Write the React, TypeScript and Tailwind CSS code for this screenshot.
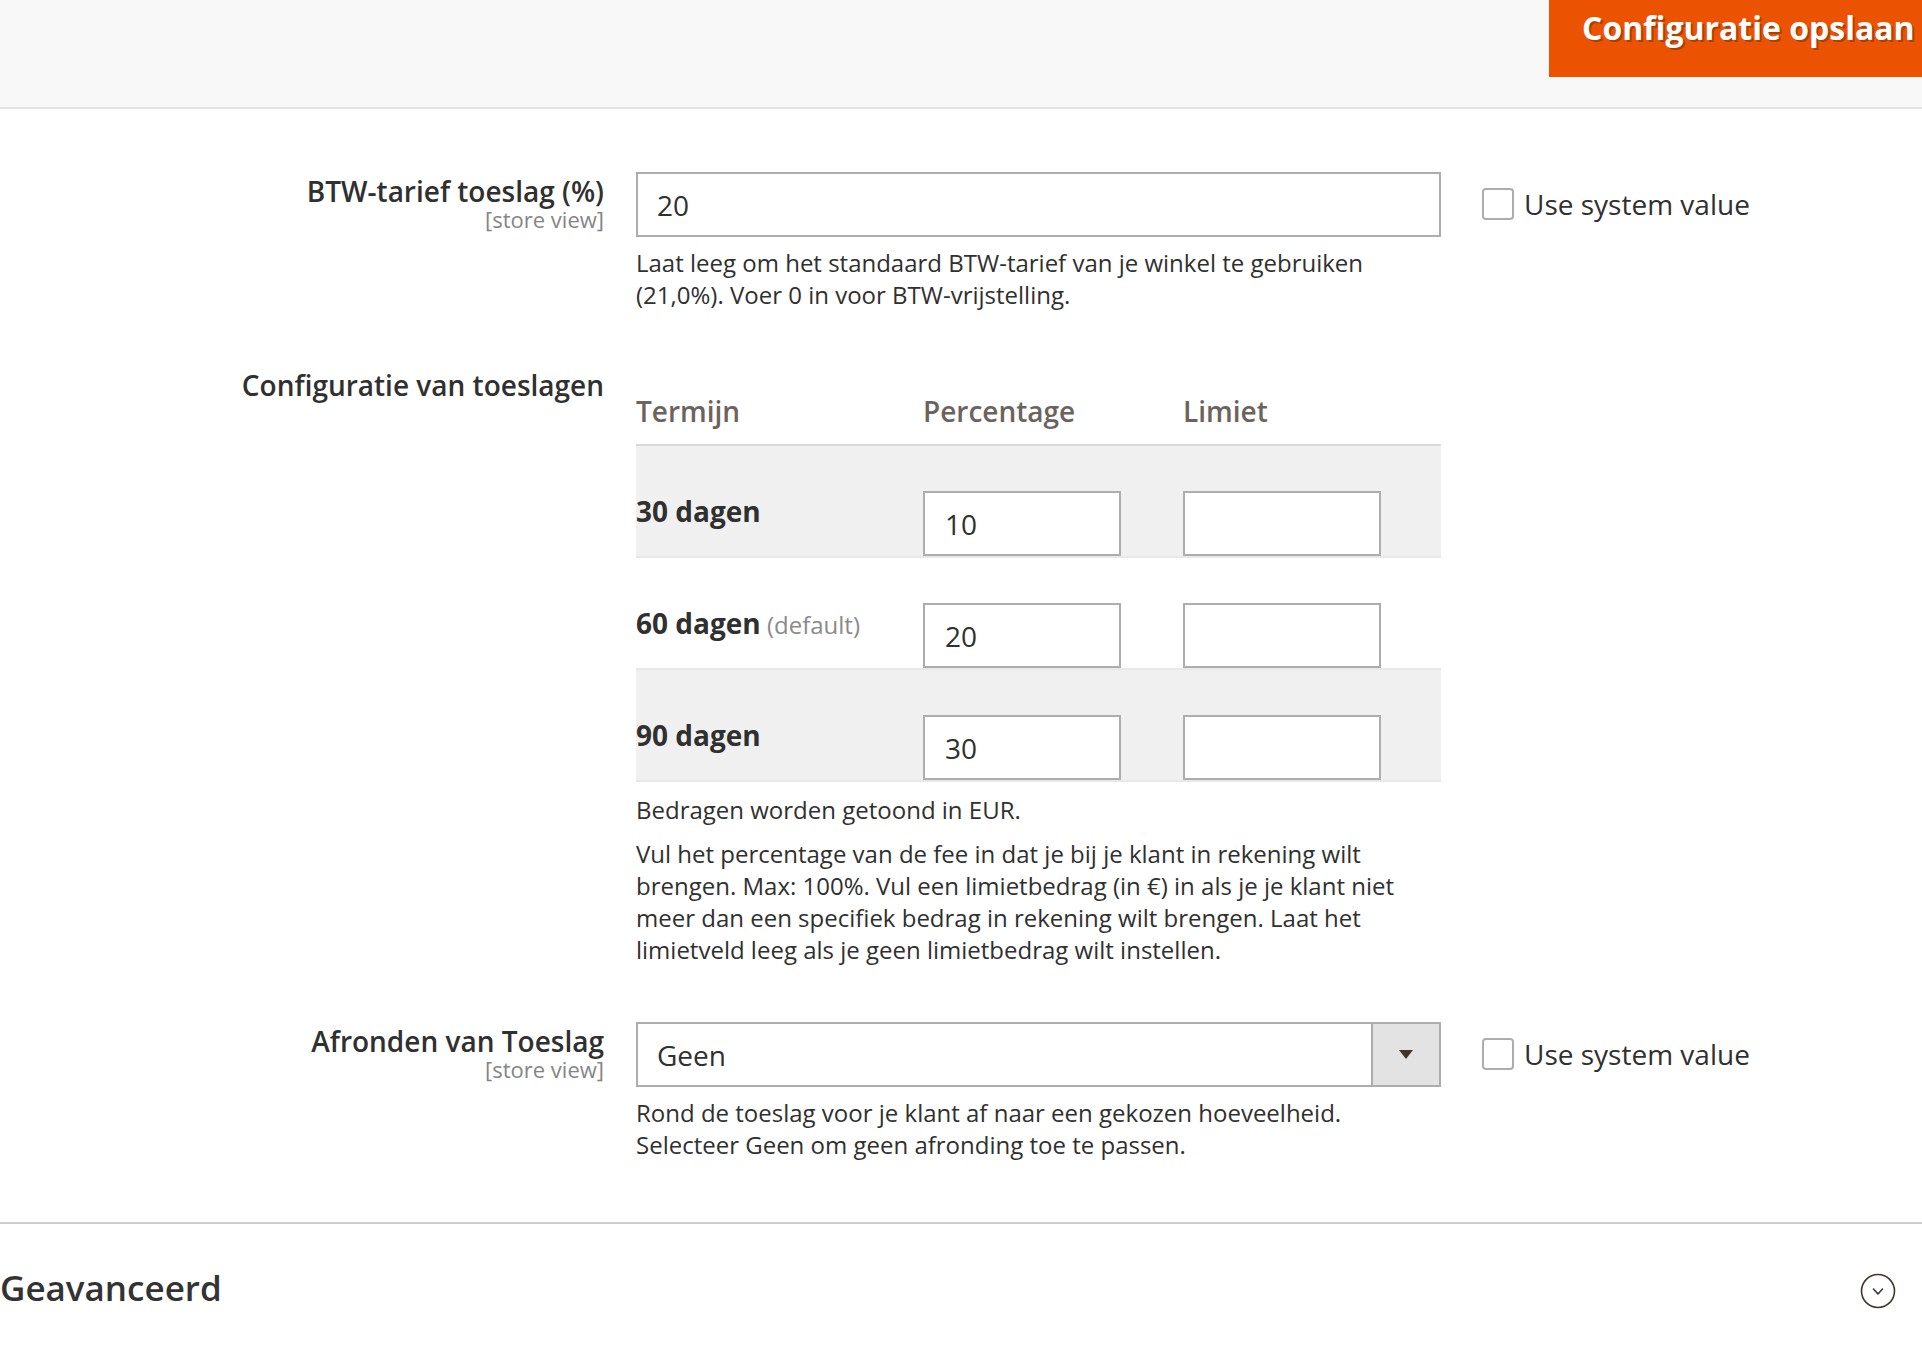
function UseSystemValue() {
  return (
    <label className="ml-[41px] mt-[12px] flex h-[40px] shrink-0 items-center gap-[10px] whitespace-nowrap text-[28px] text-[#303030]">
      <span className="h-[32px] w-[32px] rounded-[4px] border-2 border-[#adadad] bg-white" />
      Use system value
    </label>
  );
}

function FieldLabel({ title, scope, top = "pt-[4px]" }: { title: string; scope?: boolean; top?: string }) {
  return (
    <div className={`w-[604px] shrink-0 text-right ${top}`}>
      <div className="text-[28px] font-semibold leading-[30px] text-[#303030]">{title}</div>
      {scope && <div className="mt-[1px] text-[22px] leading-[24px] text-[#858585]">[store view]</div>}
    </div>
  );
}

const rows = [
  { term: "30 dagen", pct: "10", note: "", bg: "bg-[#f0f0f0]" },
  { term: "60 dagen", pct: "20", note: "(default)", bg: "bg-white" },
  { term: "90 dagen", pct: "30", note: "", bg: "bg-[#f0f0f0]" },
];

export default function App() {
  return (
    <div className="min-h-screen bg-white font-['Open_Sans',sans-serif] text-[#303030]">
      <header className="flex h-[109px] justify-end overflow-hidden border-b-2 border-[#e3e3e3] bg-[#f8f8f8]">
        <button className="h-[77px] w-[373px] shrink-0 whitespace-nowrap bg-[#eb5202] pb-[21px] pl-[33px] text-left text-[32px] font-bold leading-[44px] text-white [text-shadow:2px_2px_0_rgba(0,0,0,0.25)]">
          Configuratie opslaan
        </button>
      </header>

      <main className="pt-[63px]">
        {/* BTW-tarief */}
        <div className="flex">
          <FieldLabel title="BTW-tarief toeslag (%)" scope />
          <div className="ml-[32px] w-[805px] shrink-0">
            <input
              defaultValue="20"
              className="h-[65px] w-full border-2 border-[#adadad] bg-white px-[19px] text-[28px] text-[#303030] outline-none"
            />
            <p className="mt-[10px] text-[24px] leading-[32px]">
              Laat leeg om het standaard BTW-tarief van je winkel te gebruiken (21,0%). Voer 0 in voor BTW-vrijstelling.
            </p>
          </div>
          <UseSystemValue />
        </div>

        {/* Toeslagen tabel */}
        <div className="mt-[58px] flex">
          <FieldLabel title="Configuratie van toeslagen" top="pt-[1px]" />
          <div className="ml-[32px] w-[805px] shrink-0">
            <div className="grid grid-cols-[287px_260px_1fr] border-b-2 border-[#d9d9d9] pb-[13px] pt-[22px] text-[28px] font-semibold leading-[40px] text-[#6b645e]">
              <div>Termijn</div>
              <div>Percentage</div>
              <div>Limiet</div>
            </div>
            {rows.map((r) => (
              <div key={r.term} className={`grid grid-cols-[287px_260px_1fr] border-b-2 border-[#e8e8e8] pt-[45px] ${r.bg}`}>
                <div className="whitespace-nowrap text-[28px] font-bold leading-[40px]">
                  {r.term}
                  {r.note && <span className="text-[24px] font-normal text-[#8a8a8a]"> {r.note}</span>}
                </div>
                <input
                  defaultValue={r.pct}
                  className="h-[65px] w-[198px] border-2 border-[#adadad] bg-white px-[20px] text-[28px] text-[#303030] outline-none"
                />
                <input className="h-[65px] w-[198px] border-2 border-[#adadad] bg-white px-[20px] text-[28px] outline-none" />
              </div>
            ))}
            <p className="mt-[12px] text-[24px] leading-[32px]">Bedragen worden getoond in EUR.</p>
            <p className="mt-[12px] text-[24px] leading-[32px]">
              Vul het percentage van de fee in dat je bij je klant in rekening wilt brengen. Max: 100%. Vul een limietbedrag (in €) in als je je klant niet meer dan een specifiek bedrag in rekening wilt brengen. Laat het limietveld leeg als je geen limietbedrag wilt instellen.
            </p>
          </div>
        </div>

        {/* Afronden */}
        <div className="mt-[56px] flex">
          <FieldLabel title="Afronden van Toeslag" scope />
          <div className="ml-[32px] w-[805px] shrink-0">
            <div className="flex h-[65px] w-full border-2 border-[#adadad] bg-white">
              <div className="flex flex-1 items-center px-[19px] text-[28px]">Geen</div>
              <div className="flex w-[68px] items-center justify-center border-l-2 border-[#adadad] bg-[#e3e3e3]">
                <svg width="16" height="11" viewBox="0 0 16 11">
                  <path d="M1 1 L15 1 L8 10 Z" fill="#41362f" />
                </svg>
              </div>
            </div>
            <p className="mt-[10px] text-[24px] leading-[32px]">
              Rond de toeslag voor je klant af naar een gekozen hoeveelheid.
              <br />
              Selecteer Geen om geen afronding toe te passen.
            </p>
          </div>
          <UseSystemValue />
        </div>

        <div className="mt-[61px] h-[2px] w-full bg-[#cccccc]" />

        <div className="mt-[43px] flex items-center justify-between pr-[26px]">
          <h2 className="text-[35px] font-semibold leading-[40px] text-[#333333]">Geavanceerd</h2>
          <svg width="36" height="36" viewBox="0 0 36 36" className="mt-[6px]" fill="none">
            <circle cx="18" cy="18" r="16.5" stroke="#41362f" strokeWidth="1.6" />
            <path d="M13.5 16 L18 21 L22.5 16" stroke="#41362f" strokeWidth="1.6" strokeLinecap="round" strokeLinejoin="round" />
          </svg>
        </div>
      </main>
    </div>
  );
}
